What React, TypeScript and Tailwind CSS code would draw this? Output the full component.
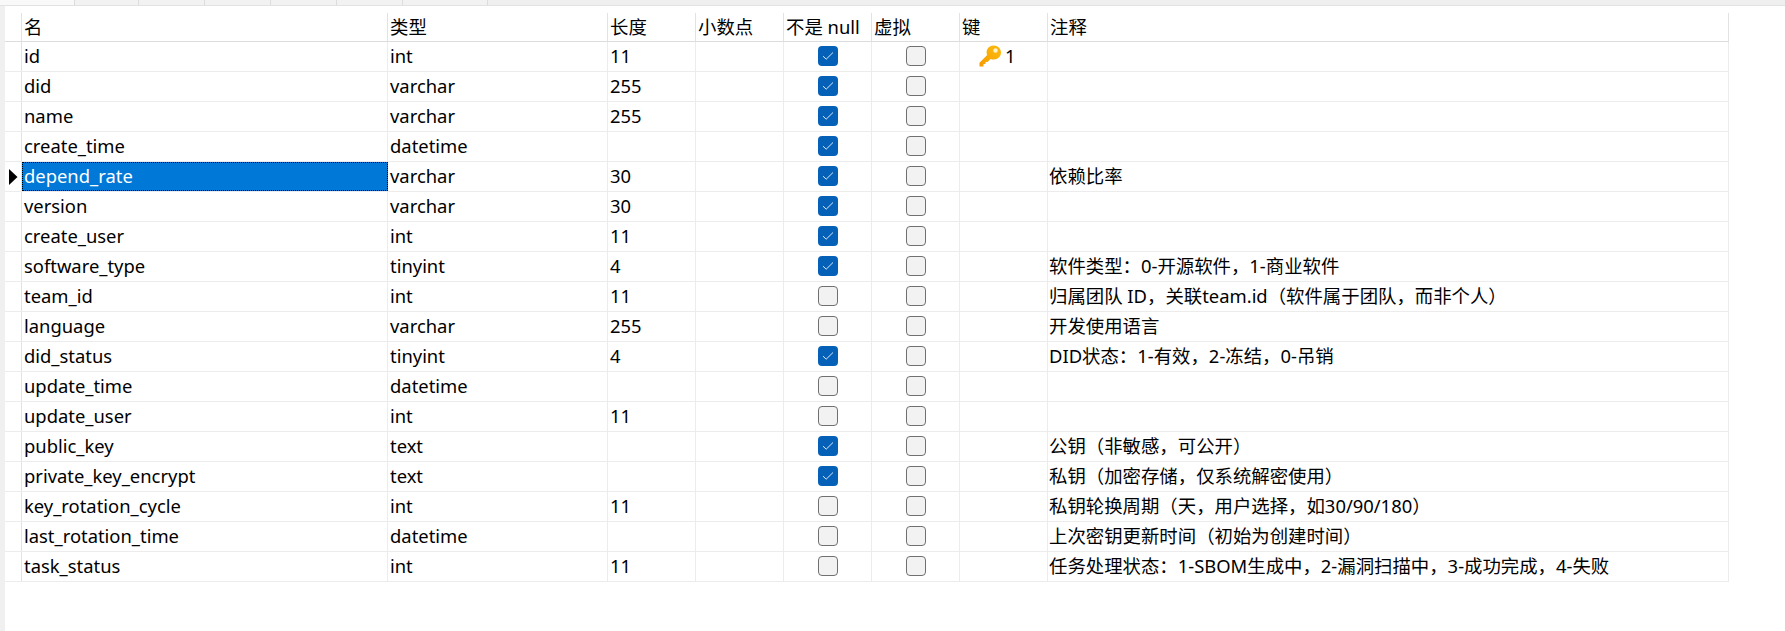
const columns = [
  { label: "名", width: "w-[366px]" },
  { label: "类型", width: "w-[220px]" },
  { label: "长度", width: "w-[88px]" },
  { label: "小数点", width: "w-[88px]" },
  { label: "不是 null", width: "w-[88px]" },
  { label: "虚拟", width: "w-[88px]" },
  { label: "键", width: "w-[88px]" },
  { label: "注释", width: "w-[681px]" },
];

const tabs = ["w-[64px]", "w-[66px]", "w-[66px]", "w-[66px]", "w-[66px]", "w-[85px]"];

const rows = [
  { name: "id", type: "int", len: "11", notNull: true, key: true, note: "" },
  { name: "did", type: "varchar", len: "255", notNull: true, note: "" },
  { name: "name", type: "varchar", len: "255", notNull: true, note: "" },
  { name: "create_time", type: "datetime", len: "", notNull: true, note: "" },
  { name: "depend_rate", type: "varchar", len: "30", notNull: true, selected: true, note: "依赖比率" },
  { name: "version", type: "varchar", len: "30", notNull: true, note: "" },
  { name: "create_user", type: "int", len: "11", notNull: true, note: "" },
  { name: "software_type", type: "tinyint", len: "4", notNull: true, note: "软件类型：0-开源软件，1-商业软件" },
  { name: "team_id", type: "int", len: "11", notNull: false, note: "归属团队 ID，关联team.id（软件属于团队，而非个人）" },
  { name: "language", type: "varchar", len: "255", notNull: false, note: "开发使用语言" },
  { name: "did_status", type: "tinyint", len: "4", notNull: true, note: "DID状态：1-有效，2-冻结，0-吊销" },
  { name: "update_time", type: "datetime", len: "", notNull: false, note: "" },
  { name: "update_user", type: "int", len: "11", notNull: false, note: "" },
  { name: "public_key", type: "text", len: "", notNull: true, note: "公钥（非敏感，可公开）" },
  { name: "private_key_encrypt", type: "text", len: "", notNull: true, note: "私钥（加密存储，仅系统解密使用）" },
  { name: "key_rotation_cycle", type: "int", len: "11", notNull: false, note: "私钥轮换周期（天，用户选择，如30/90/180）" },
  { name: "last_rotation_time", type: "datetime", len: "", notNull: false, note: "上次密钥更新时间（初始为创建时间）" },
  { name: "task_status", type: "int", len: "11", notNull: false, note: "任务处理状态：1-SBOM生成中，2-漏洞扫描中，3-成功完成，4-失败" },
];

function Checkbox({ checked }: { checked: boolean }) {
  if (checked) {
    return (
      <div className="w-5 h-5 rounded-[4px] bg-[#0560b8] flex items-center justify-center">
        <svg width="12" height="10" viewBox="0 0 12 10" fill="none">
          <path d="M1 5.2 L4.2 8.2 L11 1.5" stroke="#dbe9f7" strokeWidth="1" />
        </svg>
      </div>
    );
  }
  return <div className="w-5 h-5 rounded-[4px] bg-[#f2f2f2] border border-[#707070]" />;
}

function KeyIcon() {
  return (
    <svg width="23" height="22" viewBox="0 0 23 22">
      <defs>
        <linearGradient id="keyFill" x1="1" y1="0" x2="0" y2="1">
          <stop offset="0.3" stopColor="#fbb40a" />
          <stop offset="1" stopColor="#f59a00" />
        </linearGradient>
      </defs>
      <path
        d="M14.5 0.5 C18.8 0.5 22 3.6 22 7.6 C22 11.6 18.8 14.6 14.8 14.6 C13.6 14.6 12.6 14.4 11.6 13.9 L8.5 17 L6.5 17 L6.5 19 L4.5 19 L4.5 21.5 L0.5 21.5 L0.5 17.8 L8.2 10 C7.8 9.2 7.6 8.4 7.6 7.4 C7.6 3.6 10.6 0.5 14.5 0.5 Z"
        fill="url(#keyFill)"
      />
      <circle cx="16.5" cy="5.5" r="2.2" fill="#fff3d0" />
    </svg>
  );
}

export default function App() {
  return (
    <div className="w-[1785px] h-[631px] bg-white overflow-hidden text-[18.4px] text-black" style={{ fontFamily: '"Noto Sans", "Noto Sans CJK SC", sans-serif' }}>
      {/* tab strip */}
      <div className="h-[6px] bg-[#efefef] border-b border-[#e2e2e2] flex">
        <div className="w-[75px] h-[5px] bg-[#f9f9f9] border-r border-[#dcdcdc]" />
        {tabs.map((w, i) => (
          <div key={i} className={`${w} h-[5px] bg-[#f2f2f2] border-r border-[#dcdcdc]`} />
        ))}
      </div>

      <div className="flex">
        <div className="w-[5px] h-[625px] bg-[#f0f0f0]" />
        <div className="pt-[7px]">
          {/* header */}
          <div className="flex h-[29px] border-b border-[#dcdcdc]">
            <div className="w-[17px] border-r border-[#e2e2e2]" />
            {columns.map((c) => (
              <div key={c.label} className={`${c.width} px-[2px] border-r border-[#e2e2e2] flex items-center leading-none`}>
                {c.label}
              </div>
            ))}
          </div>

          {/* rows */}
          {rows.map((r) => (
            <div key={r.name} className="flex h-[30px] border-b border-[#ececec]">
              <div className="w-[17px] border-r border-[#e2e2e2] flex items-center justify-center">
                {r.selected && (
                  <svg width="10" height="16" viewBox="0 0 10 16">
                    <path d="M1 0 L9.5 8 L1 16 Z" fill="#000" />
                  </svg>
                )}
              </div>
              <div
                className={
                  r.selected
                    ? "w-[366px] px-[1px] pb-[2px] bg-[#0078d7] text-white border border-dotted border-black flex items-center"
                    : "w-[366px] px-[2px] pb-[2px] border-r border-[#ececec] flex items-center"
                }
              >
                {r.name}
              </div>
              <div className="w-[220px] px-[2px] pb-[2px] border-r border-[#ececec] flex items-center">{r.type}</div>
              <div className="w-[88px] px-[2px] pb-[2px] border-r border-[#ececec] flex items-center">{r.len}</div>
              <div className="w-[88px] border-r border-[#ececec]" />
              <div className="w-[88px] pb-[1px] border-r border-[#ececec] flex items-center justify-center">
                <Checkbox checked={r.notNull} />
              </div>
              <div className="w-[88px] pb-[1px] border-r border-[#ececec] flex items-center justify-center">
                <Checkbox checked={false} />
              </div>
              <div className="w-[88px] pb-[1px] border-r border-[#ececec] flex items-center pl-[19px] gap-[3px]">
                {r.key && (
                  <>
                    <KeyIcon />
                    <span>1</span>
                  </>
                )}
              </div>
              <div className="w-[681px] px-[1px] pb-[2px] border-r border-[#ececec] flex items-center whitespace-nowrap">{r.note}</div>
            </div>
          ))}
        </div>
      </div>
    </div>
  );
}
